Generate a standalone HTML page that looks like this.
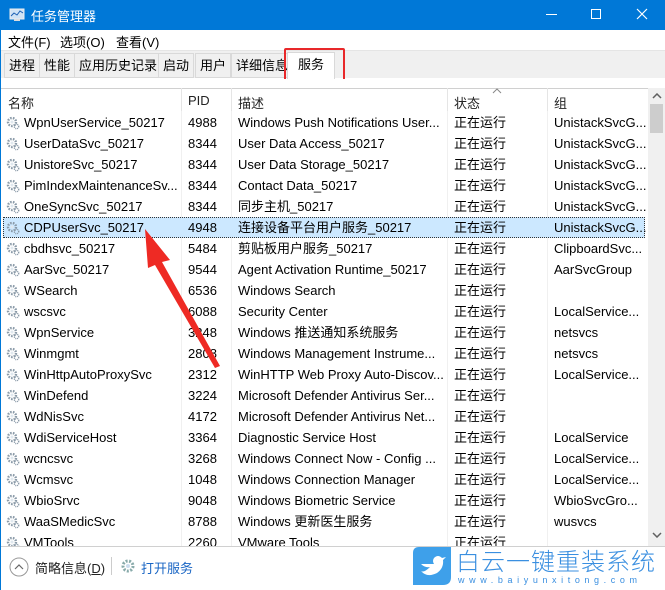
<!DOCTYPE html><html><head><meta charset="utf-8"><style>
*{margin:0;padding:0;box-sizing:border-box}
body{width:665px;height:590px;overflow:hidden;background:#fff;font-family:"Liberation Sans","Noto Sans CJK SC",sans-serif;font-size:13px;color:#000;position:relative}
.abs{position:absolute}
#title{left:0;top:0;width:665px;height:30px;background:#0078d7;color:#fff}
#menu span{position:absolute;top:32px}
#tabs{left:0;top:50px;width:665px;height:28px;background:#f0f0f0;border-top:1px solid #e5e5e5}
.tab{position:absolute;top:53px;height:25px;line-height:24px;border:1px solid #d9d9d9;background:#f0f0f0;padding:0 4px;font-size:13px}
#hdr{left:0;top:88px;width:648px;height:23px;border-top:1px solid #d0d0d0}
#hdr span{position:absolute;top:4px;color:#222}
.vl{position:absolute;top:88px;width:1px;height:23px;background:#e5e5e5}
#list{left:0;top:111px;width:648px;height:435px;overflow:hidden}
.row{position:absolute;left:0;width:648px;height:21px;line-height:21px;white-space:nowrap}
.row span{position:absolute;top:0}
.selbg{position:absolute;left:3px;width:642px;height:21px;background:#cce8ff;outline:1px dotted #333;outline-offset:-1px}
.gear{position:absolute;left:6px;top:4px;width:14px;height:14px}
</style></head><body>
<div id="title" class="abs">
<svg class="abs" style="left:9px;top:8px" width="16" height="14"><rect x="1" y="1" width="14" height="10" fill="#cfe3f5" stroke="#eee"/><polyline points="2,8 5,5 8,7 11,3 14,5" fill="none" stroke="#1a5fb4" stroke-width="1"/><rect x="5" y="11" width="6" height="2" fill="#ddd"/></svg>
<span class="abs" style="left:31px;top:6px;font-size:13px">任务管理器</span>
<div class="abs" style="left:546px;top:14px;width:11px;height:1px;background:#fff"></div>
<div class="abs" style="left:591px;top:9px;width:10px;height:10px;border:1px solid #fff"></div>
<svg class="abs" style="left:636px;top:8px" width="12" height="12"><path d="M1 1L11 11M11 1L1 11" stroke="#fff" stroke-width="1.2"/></svg>
</div>
<div id="menu"><span style="left:8px">文件(F)</span><span style="left:60px">选项(O)</span><span style="left:116px">查看(V)</span></div>
<div id="tabs" class="abs"></div>
<div class="tab" style="left:4px">进程</div>
<div class="tab" style="left:39px">性能</div>
<div class="tab" style="left:74px">应用历史记录</div>
<div class="tab" style="left:158px">启动</div>
<div class="tab" style="left:195px">用户</div>
<div class="tab" style="left:231px">详细信息</div>
<div class="tab" style="left:287px;top:52px;height:27px;background:#fff;border-bottom:none;padding:0 10px">服务</div>
<div class="abs" style="left:284px;top:48px;width:61px;height:33px;border:2px solid #e8282a;border-radius:2px"></div>
<div class="abs" style="left:0;top:79px;width:665px;height:9px;background:#fff"></div>
<div id="hdr" class="abs"><span style="left:8px">名称</span><span style="left:188px">PID</span><span style="left:238px">描述</span><span style="left:454px">状态</span><span style="left:554px">组</span></div>
<svg class="abs" style="left:492px;top:88px" width="10" height="6"><path d="M1 5L5 1L9 5" fill="none" stroke="#888"/></svg>
<div class="vl" style="left:181px"></div><div class="vl" style="left:231px"></div><div class="vl" style="left:447px"></div><div class="vl" style="left:547px"></div>
<div id="list" class="abs">
<div class="abs" style="left:181px;top:0;width:1px;height:435px;background:#f0f0f0"></div>
<div class="abs" style="left:231px;top:0;width:1px;height:435px;background:#f0f0f0"></div>
<div class="abs" style="left:447px;top:0;width:1px;height:435px;background:#f0f0f0"></div>
<div class="abs" style="left:547px;top:0;width:1px;height:435px;background:#f0f0f0"></div>
<div class="selbg" style="top:106px"></div>
<div id="rows"></div>
</div>
<div class="abs" style="left:648px;top:88px;width:17px;height:458px;background:#f0f0f0"></div>
<svg class="abs" style="left:652px;top:93px" width="10" height="6"><path d="M1 5L5 1L9 5" fill="none" stroke="#606060" stroke-width="1.5"/></svg>
<div class="abs" style="left:650px;top:104px;width:13px;height:29px;background:#cdcdcd"></div>
<svg class="abs" style="left:652px;top:532px" width="10" height="6"><path d="M1 1L5 5L9 1" fill="none" stroke="#606060" stroke-width="1.5"/></svg>
<div class="abs" style="left:0;top:546px;width:665px;height:1px;background:#d0d0d0"></div>
<div class="abs" style="left:0;top:0;width:1px;height:590px;background:#0078d7"></div>
<svg class="abs" style="left:9px;top:557px" width="20" height="20"><circle cx="10" cy="10" r="9" fill="none" stroke="#999"/><path d="M6 12L10 8L14 12" fill="none" stroke="#666" stroke-width="1.2"/></svg>
<span class="abs" style="left:35px;top:558px;color:#222">简略信息(<u>D</u>)</span>
<div class="abs" style="left:111px;top:557px;width:1px;height:18px;background:#ccc"></div>
<svg class="abs" style="left:120px;top:558px" width="16" height="16" viewBox="0 0 16 16"><circle cx="8" cy="8" r="5" fill="none" stroke="#8aa" stroke-width="3" stroke-dasharray="2 1.5"/><circle cx="8" cy="8" r="2" fill="#cde"/></svg>
<span class="abs" style="left:141px;top:558px;color:#1a66c4">打开服务</span>
<svg class="abs" style="left:0;top:0" width="665" height="590"><polygon points="145,229 170,260 162,262 220,366 215,368 155,265 148,268" fill="#ee2a24"/></svg>
<div class="abs" style="left:413px;top:547px;width:252px;height:43px;background:#fff"></div>
<svg class="abs" style="left:413px;top:547px" width="38" height="38" viewBox="0 0 38 38"><path d="M6 0H38V30Q38 38 30 38H0V6Q0 0 6 0Z" fill="#3ea0ea"/><path d="M8 17Q12 21 17 20Q11 26 8 24Q14 31 24 26Q31 21 30 13L33 10L29 11Q25 7 21 11Q19 14 21 17Q14 17 8 17Z" fill="#fff"/></svg>
<div class="abs" style="left:456px;top:546px;font-size:24px;line-height:28px;color:#3a8fe0;white-space:nowrap;letter-spacing:1px;font-family:'Noto Sans CJK SC',sans-serif;font-weight:300">白云一键重装系统</div>
<div class="abs" style="left:458px;top:575px;font-size:9px;line-height:10px;color:#3a8fe0;white-space:nowrap;letter-spacing:4.6px">www.baiyunxitong.com</div>
<script>
var d=[["WpnUserService_50217","4988","Windows Push Notifications User...","UnistackSvcG..."],["UserDataSvc_50217","8344","User Data Access_50217","UnistackSvcG..."],["UnistoreSvc_50217","8344","User Data Storage_50217","UnistackSvcG..."],["PimIndexMaintenanceSv...","8344","Contact Data_50217","UnistackSvcG..."],["OneSyncSvc_50217","8344","同步主机_50217","UnistackSvcG..."],["CDPUserSvc_50217","4948","连接设备平台用户服务_50217","UnistackSvcG..."],["cbdhsvc_50217","5484","剪贴板用户服务_50217","ClipboardSvc..."],["AarSvc_50217","9544","Agent Activation Runtime_50217","AarSvcGroup"],["WSearch","6536","Windows Search",""],["wscsvc","6088","Security Center","LocalService..."],["WpnService","3248","Windows 推送通知系统服务","netsvcs"],["Winmgmt","2808","Windows Management Instrume...","netsvcs"],["WinHttpAutoProxySvc","2312","WinHTTP Web Proxy Auto-Discov...","LocalService..."],["WinDefend","3224","Microsoft Defender Antivirus Ser...",""],["WdNisSvc","4172","Microsoft Defender Antivirus Net...",""],["WdiServiceHost","3364","Diagnostic Service Host","LocalService"],["wcncsvc","3268","Windows Connect Now - Config ...","LocalService..."],["Wcmsvc","1048","Windows Connection Manager","LocalService..."],["WbioSrvc","9048","Windows Biometric Service","WbioSvcGro..."],["WaaSMedicSvc","8788","Windows 更新医生服务","wusvcs"],["VMTools","2260","VMware Tools",""]];
var h="",g='<svg class="gear" viewBox="0 0 14 14"><circle cx="6" cy="6" r="4" fill="none" stroke="#8a9aa8" stroke-width="2.4" stroke-dasharray="1.6 1.2"/><circle cx="6" cy="6" r="1.5" fill="#e0e8ef"/><circle cx="10.5" cy="10.5" r="2.2" fill="none" stroke="#8a9aa8" stroke-width="1.4" stroke-dasharray="1 0.8"/></svg>';
d.forEach(function(r,i){h+='<div class="row" style="top:'+(1+21*i)+'px">'+g+'<span style="left:24px">'+r[0]+'</span><span style="left:188px">'+r[1]+'</span><span style="left:238px">'+r[2]+'</span><span style="left:454px">正在运行</span><span style="left:554px">'+r[3]+'</span></div>'});
document.getElementById("rows").innerHTML=h;
</script>
</body></html>
